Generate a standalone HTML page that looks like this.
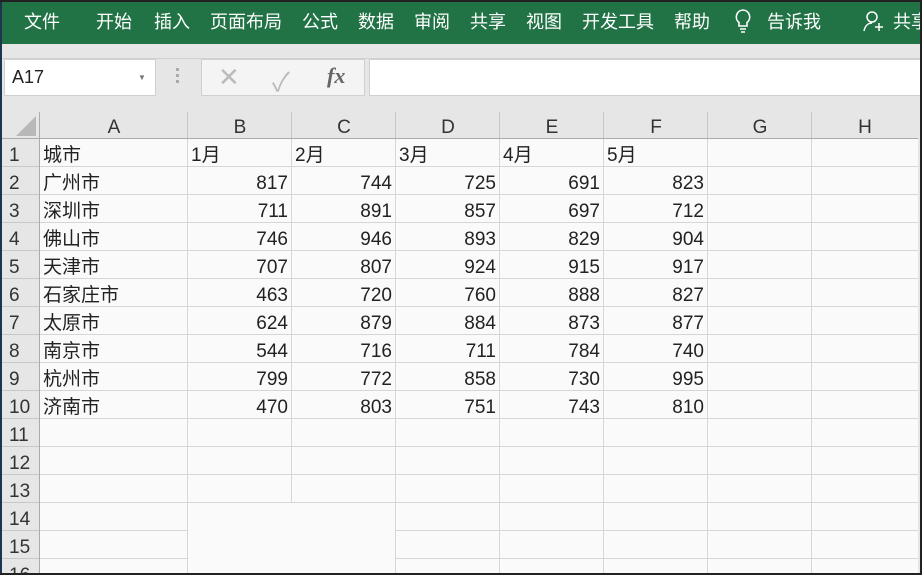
<!DOCTYPE html>
<html style="overflow:hidden;width:922px;height:575px"><head><meta charset="utf-8"><style>
*{margin:0;padding:0;box-sizing:border-box}
body{width:922px;height:575px;overflow:hidden;background:#e6e6e6;font-family:"Liberation Sans","Noto Sans CJK SC",sans-serif;position:relative}
.abs{position:absolute}
#rib{left:0;top:0;width:922px;height:44px;background:#217346;color:#fff;font-size:18px}
#rib span{position:absolute;top:8px;white-space:nowrap}
.cell{position:absolute;height:28px;line-height:33px;font-size:19px;color:#222;white-space:nowrap}
.hl{position:absolute;height:1px;background:#d6d6d6}
.vl{position:absolute;width:1px;background:#d6d6d6}
#clip{position:absolute;left:0;top:0;width:922px;height:573px;overflow:hidden}
</style></head><body>
<div id="rib" class="abs">
<span style="left:24px">文件</span>
<span style="left:96px">开始</span>
<span style="left:154px">插入</span>
<span style="left:210px">页面布局</span>
<span style="left:302px">公式</span>
<span style="left:358px">数据</span>
<span style="left:414px">审阅</span>
<span style="left:470px">共享</span>
<span style="left:526px">视图</span>
<span style="left:582px">开发工具</span>
<span style="left:674px">帮助</span>
<svg class="abs" style="left:733px;top:8px" width="20" height="26" viewBox="0 0 20 26"><path d="M10 2a7 7 0 0 0-4 12.5V18h8v-3.5A7 7 0 0 0 10 2z" fill="none" stroke="#fff" stroke-width="1.6"/><path d="M7 21h6M8 24h4" stroke="#fff" stroke-width="1.6"/></svg>
<span style="left:767px">告诉我</span>
<svg class="abs" style="left:862px;top:9px" width="24" height="24" viewBox="0 0 24 24"><circle cx="10" cy="8" r="5" fill="none" stroke="#fff" stroke-width="1.5"/><path d="M2 22c1-5 4-8 8-8" fill="none" stroke="#fff" stroke-width="1.5"/><path d="M13 18h8M17 14v8" stroke="#fff" stroke-width="1.5"/></svg>
<span style="left:893px">共享</span>
</div>
<div class="abs" style="left:0;top:58px;width:922px;height:1px;background:#d0d0d0"></div>
<div class="abs" style="left:4px;top:59px;width:152px;height:37px;background:#fff;border:1px solid #d0d0d0;font-size:18px;line-height:35px;padding-left:7px;color:#222">A17<span style="position:absolute;left:133px;top:0;font-size:8px;color:#777">▼</span></div>
<div class="abs" style="left:176px;top:68px;width:3px;height:18px;background:repeating-linear-gradient(#aaa 0 3px,transparent 3px 6px)"></div>
<div class="abs" style="left:201px;top:59px;width:164px;height:37px;background:#f4f4f4;border:1px solid #d0d0d0"></div>
<div class="abs" style="left:218px;top:62px;font-size:26px;color:#bbb">✕</div>
<div class="abs" style="left:272px;top:62px;font-size:26px;color:#bbb">✓</div>
<div class="abs" style="left:327px;top:63px;font-size:22px;color:#666;font-family:'Liberation Serif',serif;font-style:italic;font-weight:bold">fx</div>
<div class="abs" style="left:369px;top:59px;width:553px;height:37px;background:#fff;border:1px solid #d0d0d0"></div>
<div id="clip">
<div class="abs" style="left:40px;top:139px;width:878px;height:434px;background:#fafafa"></div>
<div class="abs" style="left:2px;top:112px;width:916px;height:26px;background:#e6e6e6"></div>
<div class="abs" style="left:2px;top:138px;width:916px;height:1px;background:#ababab"></div>
<div class="abs" style="left:2px;top:139px;width:37px;height:434px;background:#e6e6e6"></div>
<div class="abs" style="left:39px;top:112px;width:1px;height:461px;background:#ababab"></div>
<svg class="abs" style="left:16px;top:116px" width="20" height="20"><path d="M20 0V20H0z" fill="#b8b8b8"/></svg>
<div id="g"></div>
</div>
<div class="abs" style="left:0;top:0;width:2px;height:575px;background:#1d3550"></div>
<div class="abs" style="right:0;top:0;width:2px;height:575px;background:#222"></div>
<div class="abs" style="left:0;top:573px;width:922px;height:2px;background:#222"></div>
<div class="abs" style="left:0;top:0;width:922px;height:2px;background:#222"></div>
<script>
var cols=[40,188,292,396,500,604,708,812,918],L="ABCDEFGH",h='';
for(var i=0;i<8;i++){h+='<div class="cell" style="left:'+cols[i]+'px;top:111px;width:'+(cols[i+1]-cols[i])+'px;text-align:center;font-size:19px;color:#333">'+L[i]+'</div>';
if(i>0)h+='<div class="vl" style="left:'+(cols[i]-1)+'px;top:112px;height:26px;background:#c8c8c8"></div>';}
var data=[["城市","1月","2月","3月","4月","5月"],["广州市",817,744,725,691,823],["深圳市",711,891,857,697,712],["佛山市",746,946,893,829,904],["天津市",707,807,924,915,917],["石家庄市",463,720,760,888,827],["太原市",624,879,884,873,877],["南京市",544,716,711,784,740],["杭州市",799,772,858,730,995],["济南市",470,803,751,743,810]];
for(var r=0;r<16;r++){var y=139+r*28;
h+='<div class="cell" style="left:9px;top:'+y+'px;color:#333">'+(r+1)+'</div>';
h+='<div class="hl" style="left:2px;top:'+(y+27)+'px;width:37px;background:#c8c8c8"></div>';
if(r==13||r==14){h+='<div class="hl" style="left:40px;top:'+(y+27)+'px;width:148px"></div><div class="hl" style="left:396px;top:'+(y+27)+'px;width:522px"></div>';}
else h+='<div class="hl" style="left:40px;top:'+(y+27)+'px;width:878px"></div>';
if(r<10){var d=data[r];for(var c=0;c<6;c++){var x=cols[c],w=cols[c+1]-cols[c];
if(r==0||c==0)h+='<div class="cell" style="left:'+(x+3)+'px;top:'+y+'px">'+d[c]+'</div>';
else h+='<div class="cell" style="left:'+x+'px;top:'+y+'px;width:'+(w-4)+'px;text-align:right">'+d[c]+'</div>';}}}
for(var i=1;i<8;i++){var x=cols[i]-1;
if(i==2)h+='<div class="vl" style="left:'+x+'px;top:139px;height:364px"></div>';
else h+='<div class="vl" style="left:'+x+'px;top:139px;height:434px"></div>';}
document.getElementById('g').innerHTML=h;
</script>
</body></html>
